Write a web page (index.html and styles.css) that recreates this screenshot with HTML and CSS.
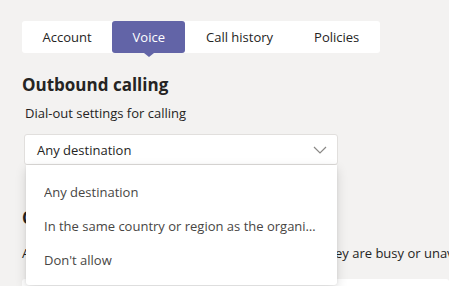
FILE: index.html
```html
<!DOCTYPE html>
<html lang="en">
<head>
    <meta charset="UTF-8">
    <title>Voice settings</title>
    <link rel="stylesheet" href="styles.css">
</head>
<body>
    <div class="page">
        <div class="tabs">
            <div class="tab">Account</div>
            <div class="tab active">Voice</div>
            <div class="tab">Call history</div>
            <div class="tab">Policies</div>
        </div>

        <section class="section">
            <h2>Outbound calling</h2>
            <p class="hint">Dial-out settings for calling</p>

            <div class="dropdown">
                <div class="dropdown-field">
                    <span>Any destination</span>
                    <svg class="chevron" width="14" height="8" viewBox="0 0 14 8">
                        <path d="M1 1 L7 7 L13 1" fill="none" stroke="#8a8886" stroke-width="1.2"/>
                    </svg>
                </div>
                <ul class="dropdown-menu">
                    <li>Any destination</li>
                    <li>In the same country or region as the organization</li>
                    <li>Don't allow</li>
                </ul>
            </div>
        </section>

        <section class="section second">
            <h2>Call answering rules</h2>
            <p class="desc">Allow calls to reach you and your delegates when they are busy or unavailable</p>
            <div class="card"></div>
        </section>
    </div>
</body>
</html>
```

FILE: styles.css
```css
body {
    margin: 0;
    height: 286px;
    background: #f3f2f1;
    font-family: "Open Sans", "Noto Sans", sans-serif;
    color: #252423;
    overflow: hidden;
}

.page {
    padding: 21px 0 0 22px;
}

.tabs {
    display: inline-flex;
    background: #fff;
    border-radius: 3px;
    height: 32px;
}

.tab {
    position: relative;
    padding: 0 20.5px;
    font-size: 13px;
    line-height: 32px;
    color: #252423;
}

.tab.active {
    background: #6264a7;
    color: #fff;
    border-radius: 3px;
}

.tab.active::after {
    content: "";
    position: absolute;
    left: 50%;
    bottom: -4px;
    margin-left: -5px;
    border-left: 5px solid transparent;
    border-right: 5px solid transparent;
    border-top: 4px solid #6264a7;
}

.section h2 {
    margin: 0;
    font-size: 17px;
    font-weight: 700;
    line-height: 24px;
}

.section {
    padding-top: 20px;
}

.hint {
    margin: 6px 0 0 3px;
    font-size: 13px;
    line-height: 20px;
}

.dropdown {
    position: relative;
    width: 314px;
    margin: 11px 0 0 2px;
}

.dropdown-field {
    display: flex;
    align-items: center;
    justify-content: space-between;
    height: 29px;
    padding: 0 10px 0 12px;
    background: #fff;
    border: 1px solid #e1dfdd;
    border-radius: 3px;
    font-size: 13px;
}

.dropdown-menu {
    position: absolute;
    top: 31px;
    left: 2px;
    width: 311px;
    box-sizing: border-box;
    margin: 0;
    padding: 10px 19px 8px 18px;
    list-style: none;
    background: #fff;
    border-radius: 0 0 3px 3px;
    box-shadow: 0 4px 12px rgba(0, 0, 0, 0.14), 0 0 3px rgba(0, 0, 0, 0.08);
    z-index: 2;
}

.dropdown-menu li {
    height: 34px;
    line-height: 34px;
    font-size: 13px;
    color: #484644;
    white-space: nowrap;
    overflow: hidden;
    text-overflow: ellipsis;
}

.second {
    padding-top: 41px;
}

.desc {
    margin: 13px 0 0;
    font-size: 13px;
    line-height: 20px;
    white-space: nowrap;
}

.card {
    height: 40px;
    margin-top: 16px;
    background: #fff;
    border-radius: 3px;
}
```
